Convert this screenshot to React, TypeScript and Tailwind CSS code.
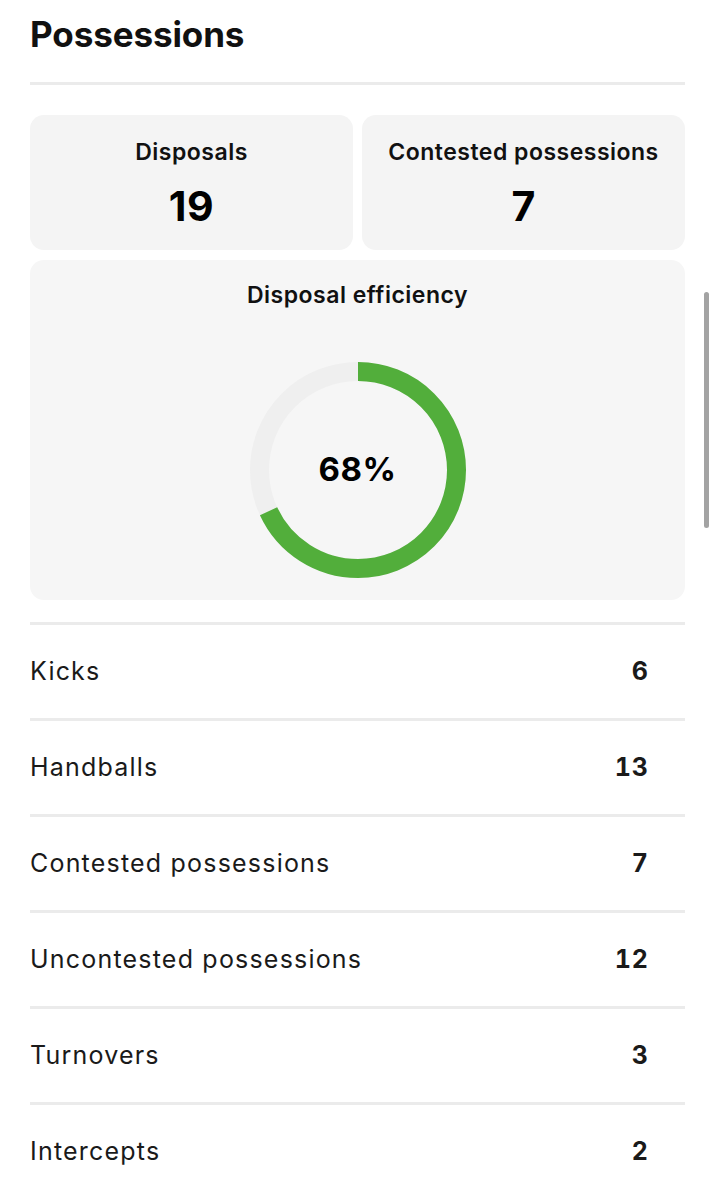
import React from 'react';

const rows = [
  { label: 'Kicks', value: 6 },
  { label: 'Handballs', value: 13 },
  { label: 'Contested possessions', value: 7 },
  { label: 'Uncontested possessions', value: 12 },
  { label: 'Turnovers', value: 3 },
  { label: 'Intercepts', value: 2 },
];

function Donut({ percent }: { percent: number }) {
  const r = 98.5;
  const c = 2 * Math.PI * r;
  return (
    <div className="relative w-[216px] h-[216px]">
      <svg width="216" height="216" viewBox="0 0 216 216" className="-rotate-90">
        <circle cx="108" cy="108" r={r} fill="none" stroke="#efefef" strokeWidth="19" />
        <circle
          cx="108"
          cy="108"
          r={r}
          fill="none"
          stroke="#52ae3b"
          strokeWidth="19"
          strokeDasharray={`${(c * percent) / 100} ${c}`}
        />
      </svg>
      <div className="absolute inset-0 flex items-center justify-center text-[33px] font-bold tracking-[0.5px] text-black">
        {percent}%
      </div>
    </div>
  );
}

export default function App() {
  return (
    <div className="relative min-h-[1200px] bg-white font-['Inter',sans-serif] text-[#111]">
      <div className="px-[30px] pt-[12px]">
        <h1 className="text-[35px] leading-[44px] font-bold tracking-[-0.1px]">Possessions</h1>
        <div className="mt-[26px] h-[3px] bg-[#ebebeb]" />

        <div className="mt-[30px] grid grid-cols-2 gap-[9px]">
          <div className="h-[135px] rounded-[14px] bg-[#f4f4f4] flex flex-col items-center pt-[23px]">
            <span className="text-[23px] leading-[28px] font-semibold tracking-[0.5px]">Disposals</span>
            <span className="mt-[16px] text-[41px] leading-[48px] font-bold text-black tracking-[0.5px]">19</span>
          </div>
          <div className="h-[135px] rounded-[14px] bg-[#f4f4f4] flex flex-col items-center pt-[23px]">
            <span className="text-[23px] leading-[28px] font-semibold tracking-[0.5px]">Contested possessions</span>
            <span className="mt-[16px] text-[41px] leading-[48px] font-bold text-black">7</span>
          </div>
        </div>

        <div className="mt-[10px] h-[340px] rounded-[14px] bg-[#f6f6f6] flex flex-col items-center pt-[21px]">
          <span className="text-[23px] leading-[28px] font-semibold tracking-[0.5px]">Disposal efficiency</span>
          <div className="mt-[53px]">
            <Donut percent={68} />
          </div>
        </div>

        <div className="mt-[22px]">
          {rows.map((row) => (
            <div key={row.label}>
              <div className="h-[3px] bg-[#ebebeb]" />
              <div className="h-[93px] flex items-center justify-between pr-[36px]">
                <span className="text-[25px] tracking-[1.2px] text-[#1a1a1a]">{row.label}</span>
                <span className="text-[25px] font-bold tabular-nums tracking-[1px] text-[#1a1a1a]">{row.value}</span>
              </div>
            </div>
          ))}
        </div>
      </div>

      <div className="absolute left-[704px] top-[292px] w-[5px] h-[236px] rounded-full bg-[#a3a3a3]" />
    </div>
  );
}
